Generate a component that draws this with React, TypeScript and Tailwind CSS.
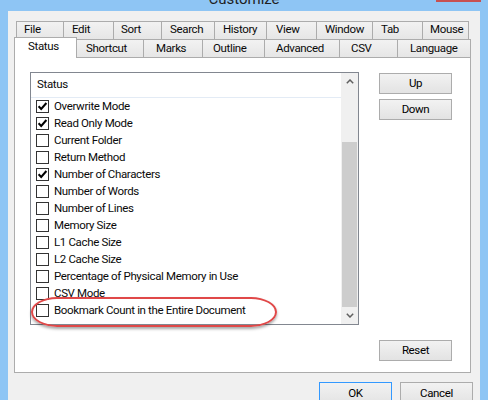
import React from "react";

type Tab = { label: string; w: number; pl: number };

const row1: Tab[] = [
  { label: "File", w: 48, pl: 7 },
  { label: "Edit", w: 50, pl: 8 },
  { label: "Sort", w: 48, pl: 7 },
  { label: "Search", w: 53, pl: 8 },
  { label: "History", w: 52, pl: 8 },
  { label: "View", w: 50, pl: 9 },
  { label: "Window", w: 56, pl: 8 },
  { label: "Tab", w: 50, pl: 8 },
  { label: "Mouse", w: 46, pl: 7 },
];

const row2: Tab[] = [
  { label: "Status", w: 63, pl: 13 },
  { label: "Shortcut", w: 67, pl: 9 },
  { label: "Marks", w: 59, pl: 12 },
  { label: "Outline", w: 62, pl: 10 },
  { label: "Advanced", w: 75, pl: 11 },
  { label: "CSV", w: 58, pl: 11 },
  { label: "Language", w: 73, pl: 12 },
];

const items: [string, boolean][] = [
  ["Overwrite Mode", true],
  ["Read Only Mode", true],
  ["Current Folder", false],
  ["Return Method", false],
  ["Number of Characters", true],
  ["Number of Words", false],
  ["Number of Lines", false],
  ["Memory Size", false],
  ["L1 Cache Size", false],
  ["L2 Cache Size", false],
  ["Percentage of Physical Memory in Use", false],
  ["CSV Mode", false],
  ["Bookmark Count in the Entire Document", false],
];

function Check({ on }: { on: boolean }) {
  return (
    <span className="flex h-[13px] w-[13px] shrink-0 items-center justify-center border border-[#333333] bg-white">
      {on && (
        <svg width="11" height="11" viewBox="0 0 11 11">
          <path d="M1.6 5.2 L4.2 8 L9.4 2" stroke="#000" strokeWidth="2" fill="none" />
        </svg>
      )}
    </span>
  );
}

function Button({ label, focus, className = "" }: { label: string; focus?: boolean; className?: string }) {
  return (
    <div
      className={`flex h-[21px] w-[73px] items-center justify-center border bg-gradient-to-b from-[#f2f2f2] to-[#e3e3e3] text-black ${
        focus ? "border-[#3399ff]" : "border-[#acacac]"
      } ${className}`}
    >
      {label}
    </div>
  );
}

function Chevron({ down }: { down?: boolean }) {
  return (
    <svg width="8" height="5" viewBox="0 0 8 5">
      <path
        d={down ? "M0.8 0.8 L4 4 L7.2 0.8" : "M0.8 4.2 L4 1 L7.2 4.2"}
        stroke="#606060"
        strokeWidth="1.5"
        fill="none"
      />
    </svg>
  );
}

export default function App() {
  return (
    <div className="relative flex h-[400px] w-[488px] flex-col overflow-hidden bg-[#8ec5f4] font-['Roboto','Noto_Sans',sans-serif] text-[11.5px] tracking-[-0.35px] text-[#0a0a0a]">
      {/* Title bar, cut off at the top */}
      <div className="relative flex h-[11px] shrink-0 justify-center overflow-hidden">
        <span className="-mt-[11px] text-[15px] leading-[20px] tracking-normal text-[#1f1f1f]">Customize</span>
        <span className="absolute right-[7px] top-0 h-[2px] w-[45px] bg-[#c75050]" />
      </div>

      <div className="flex-1 px-[8px]">
        <div className="h-full bg-[#f0f0f0] pl-[6px] pt-[10px]">
          {/* Tabs, back row */}
          <div className="flex h-[18px] pl-[2px]">
            {row1.map((t, i) => (
              <div
                key={t.label}
                style={{ width: t.w, paddingLeft: t.pl }}
                className={`flex h-full items-center border-r border-t border-[#acacac] bg-gradient-to-b from-[#f2f2f2] to-[#e6e6e6] pb-[1px] ${
                  i === 0 ? "border-l" : ""
                }`}
              >
                {t.label}
              </div>
            ))}
          </div>

          {/* Tabs, front row */}
          <div className="-mt-[2px] flex h-[20px] items-end">
            {row2.map((t, i) =>
              i === 0 ? (
                <div
                  key={t.label}
                  style={{ width: t.w, paddingLeft: t.pl }}
                  className="relative z-10 -mb-px flex h-[21px] items-center border-l border-r border-t border-[#acacac] bg-white pb-[2px]"
                >
                  {t.label}
                </div>
              ) : (
                <div
                  key={t.label}
                  style={{ width: t.w, paddingLeft: t.pl }}
                  className="flex h-[18px] items-center border-r border-t border-[#acacac] bg-gradient-to-b from-[#f2f2f2] to-[#e6e6e6]"
                >
                  {t.label}
                </div>
              )
            )}
          </div>

          {/* Panel */}
          <div className="flex h-[316px] w-[457px] border border-[#acacac] bg-white pl-[15px] pt-[14px]">
            <div className="flex h-[253px] w-[329px] border border-[#828790]">
              <div className="flex flex-1 flex-col">
                <div className="flex h-[25px] items-center border-b border-[#e3ebf5] pl-[6px]">Status</div>
                {items.map(([label, on]) => (
                  <div key={label} className="flex h-[17px] items-center gap-[5px] pl-[5px] whitespace-nowrap">
                    <Check on={on} />
                    <span>{label}</span>
                  </div>
                ))}
              </div>
              <div className="flex w-[17px] flex-col bg-[#f0f0f0]">
                <div className="flex h-[17px] items-center justify-center">
                  <Chevron />
                </div>
                <div className="flex flex-1 flex-col pt-[52px]">
                  <div className="mx-[1px] flex-1 bg-[#cdcdcd]" />
                </div>
                <div className="flex h-[17px] items-center justify-center">
                  <Chevron down />
                </div>
              </div>
            </div>

            <div className="ml-[20px] flex flex-col pb-[11px]">
              <Button label="Up" className="mt-[1px]" />
              <Button label="Down" className="mt-[5px]" />
              <div className="flex-1" />
              <Button label="Reset" />
            </div>
          </div>

          {/* Dialog buttons */}
          <div className="mt-[9px] flex w-[459px] justify-end gap-[8px]">
            <Button label="OK" focus className="h-[23px]" />
            <Button label="Cancel" className="h-[23px]" />
          </div>
        </div>
      </div>

      {/* Hand-drawn highlight around the last row */}
      <div className="pointer-events-none absolute left-[31px] top-[297px] h-[30px] w-[246px] rounded-[26px/15px] border-[2.5px] border-[#e04848] shadow-[0_2px_3px_rgba(0,0,0,0.35)]" />
    </div>
  );
}
